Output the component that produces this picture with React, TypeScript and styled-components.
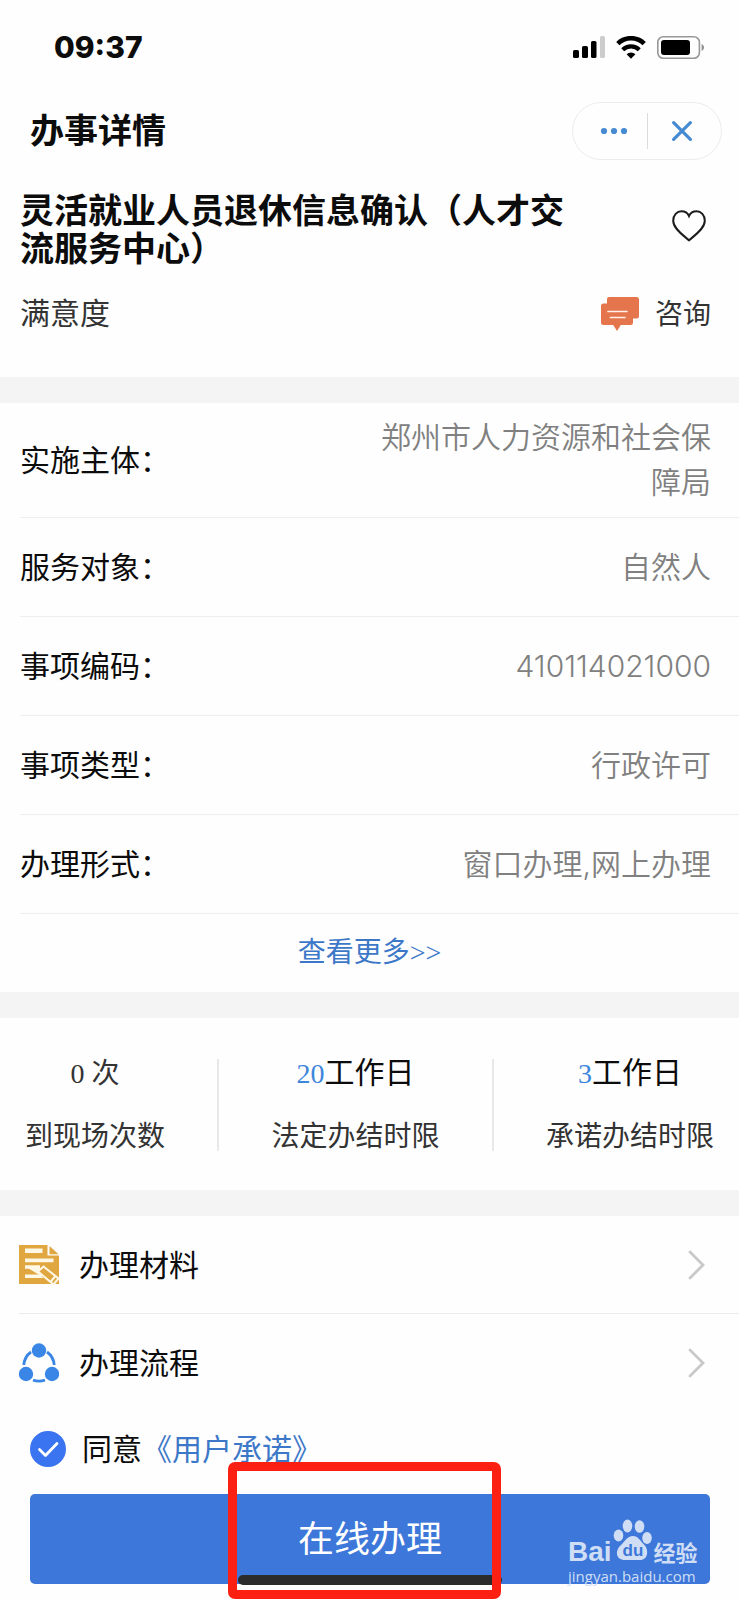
import React from "react";
import styled, { createGlobalStyle } from "styled-components";

const sans = `Inter, "Noto Sans CJK SC", sans-serif`;
const serif = `"Liberation Serif", "Noto Sans CJK SC", serif`;

const GlobalStyle = createGlobalStyle`
  *, *::before, *::after { box-sizing: border-box; }
  body { margin: 0; background: #fefefe; color: #0c0c0c; font-family: ${sans}; font-size: 30px; line-height: 44px; }
  button { font: inherit; color: inherit; background: none; border: 0; padding: 0; cursor: pointer; }
  svg { display: block; flex: none; }
  h1, h2, p, dl, dt, dd { margin: 0; padding: 0; }
`;

const Page = styled.main`
  width: 100%;
  overflow: hidden;
`;

const StatusBar = styled.header`
  display: flex;
  align-items: center;
  justify-content: space-between;
  height: 94px;
  padding: 0 34px 0 54px;
`;

const Clock = styled.time`
  font-weight: 800;
  font-size: 30px;
`;

const StatusIcons = styled.div`
  display: flex;
  align-items: center;
  gap: 11px;
`;

const NavBar = styled.nav`
  display: flex;
  align-items: center;
  justify-content: space-between;
  height: 74px;
  padding: 0 17px 0 30px;
`;

const NavTitle = styled.h1`
  font-size: 34px;
  font-weight: 700;
  line-height: 40px;
`;

const Capsule = styled.div`
  display: flex;
  align-items: center;
  width: 150px;
  height: 58px;
  border: 1px solid #ececec;
  border-radius: 29px;
`;

const CapsuleButton = styled.button`
  display: flex;
  width: 50%;
  height: 36px;
  padding-left: 8px;
  align-items: center;
  justify-content: center;
  & + & {
    padding: 0 6px 0 0;
    border-left: 1px solid #dcdcdc;
  }
`;

const Summary = styled.section`
  padding: 24px 28px 20px 20px;
`;

const SummaryRow = styled.div`
  display: flex;
  align-items: center;
  justify-content: space-between;
`;

const ItemTitle = styled.h2`
  max-width: 560px;
  font-size: 34px;
  font-weight: 700;
  line-height: 38px;
`;

const IconButton = styled.button`
  padding: 0 5px 8px;
`;

const Satisfaction = styled.p`
  color: #333;
`;

const Consult = styled.button`
  display: flex;
  align-items: center;
  gap: 15px;
  margin: 24px 0 21px;
  color: #333;
  font-size: 28px;
`;

const Band = styled.div`
  height: 26px;
  background: #f4f4f4;
`;

const Details = styled.dl`
  padding-left: 20px;
`;

const DetailRow = styled.div`
  display: flex;
  align-items: center;
  justify-content: space-between;
  min-height: 99px;
  padding: 12px 28px 12px 0;
  border-bottom: 1px solid #eee;
  line-height: 45px;
`;

const DetailValue = styled.dd`
  max-width: 350px;
  color: #808080;
  font-weight: 350;
  text-align: right;
`;

const MoreLink = styled.a`
  display: block;
  color: #3d78c8;
  font-family: ${serif};
  font-size: 28px;
  line-height: 78px;
  text-align: center;
  text-decoration: none;
`;

const Stats = styled.section`
  display: flex;
  align-items: center;
  justify-content: space-between;
  padding: 32px 25px 31px;
`;

const Stat = styled.div`
  display: flex;
  flex-direction: column;
  align-items: center;
  gap: 18px;
  color: #333;
  font-size: 28px;
  line-height: 45px;
`;

const StatValue = styled.p`
  font-family: ${serif};
`;

const Days = styled.span`
  color: #3d86dc;
`;

const Unit = styled.span`
  color: #0c0c0c;
  font-size: 30px;
`;

const Divider = styled.div`
  width: 2px;
  height: 92px;
  background: #e8e8e8;
`;

const Links = styled.section`
  padding-left: 19px;
`;

const LinkRow = styled.a`
  display: flex;
  align-items: center;
  gap: 20px;
  height: 97px;
  padding-right: 34px;
  color: inherit;
  text-decoration: none;
  & + & {
    height: 99px;
    border-top: 1px solid #ebebeb;
  }
`;

const LinkText = styled.span`
  flex: 1;
`;

const Agreement = styled.div`
  display: flex;
  align-items: center;
  height: 44px;
  margin-top: 15px;
  padding-left: 30px;
`;

const AgreeLabel = styled.label`
  display: flex;
  align-items: center;
  gap: 16px;
`;

const TickWrap = styled.span`
  display: block;
  position: relative;
  width: 36px;
  height: 36px;
  svg { position: absolute; inset: 0; pointer-events: none; }
`;

const Tick = styled.input`
  appearance: none;
  display: block;
  width: 36px;
  height: 36px;
  margin: 0;
  border: 2px solid #3a74f0;
  border-radius: 50%;
  &:checked { background: #3a74f0; }
`;

const PromiseLink = styled.a`
  color: #3d78c8;
  text-decoration: none;
`;

const ActionArea = styled.footer`
  position: relative;
  padding: 23px 29px 16px 30px;
`;

const SubmitButton = styled.button`
  display: block;
  width: 100%;
  height: 90px;
  border-radius: 5px;
  background: #3c77d9;
  color: #fff;
  font-size: 36px;
`;

const HomeIndicator = styled.div`
  position: absolute;
  bottom: 15px;
  left: calc(50% - 132px);
  width: 264px;
  height: 10px;
  border-radius: 5px;
  background: #2b2b2b;
`;

const Highlight = styled.div`
  position: absolute;
  bottom: 1px;
  left: calc(50% - 142px);
  width: 273px;
  height: 137px;
  border: 9px solid #fb2012;
  border-radius: 7px;
  pointer-events: none;
`;

const Watermark = styled.div`
  position: absolute;
  right: 39px;
  bottom: 14px;
  width: 132px;
  color: #d0def5;
  pointer-events: none;
`;

const WatermarkBrand = styled.div`
  display: flex;
  align-items: baseline;
  font-family: "Liberation Sans", "Noto Sans CJK SC", sans-serif;
  font-size: 28px;
  font-weight: 700;
  line-height: 24px;
`;

const WatermarkSuffix = styled.span`
  font-size: 22px;
`;

const WatermarkUrl = styled.div`
  font-family: "Open Sans", sans-serif;
  font-size: 15px;
  line-height: 20px;
`;

const SignalIcon = () => (
  <svg width="32" height="22" viewBox="0 0 32 22">
    <rect x="0" y="14" width="6" height="8" rx="1.6" />
    <rect x="9" y="10" width="6" height="12" rx="1.6" />
    <rect x="18" y="5" width="5.5" height="17" rx="1.6" />
    <rect x="27" y="0" width="5" height="22" rx="1.6" fill="#ccc" />
  </svg>
);

const WifiIcon = () => (
  <svg width="30" height="23" viewBox="0 0 30 23">
    <path d="M1.8 7.6a18.8 18.8 0 0 1 26.4 0" fill="none" stroke="#000" strokeWidth="4.6" />
    <path d="M6.7 13.7a11.8 11.8 0 0 1 16.6 0" fill="none" stroke="#000" strokeWidth="4.2" />
    <path d="M10.6 18.3a6.2 6.2 0 0 1 8.8 0L15 22.8z" />
  </svg>
);

const BatteryIcon = () => (
  <svg width="48" height="23" viewBox="0 0 48 23">
    <rect x="0.8" y="0.8" width="41.6" height="21.4" rx="5.5" fill="none" stroke="#979797" strokeWidth="1.6" />
    <rect x="4" y="4" width="29" height="15" rx="3" />
    <path d="M44.6 8c3.2 1.6 3.2 5.4 0 7z" fill="#8f8f8f" />
  </svg>
);

const DotsIcon = () => (
  <svg width="28" height="8" viewBox="0 0 28 8" fill="#468ad2">
    <circle cx="4" cy="4" r="3.1" />
    <circle cx="14" cy="4" r="3.1" />
    <circle cx="24" cy="4" r="3.1" />
  </svg>
);

const CloseIcon = () => (
  <svg width="22" height="22" viewBox="0 0 22 22">
    <path d="M2.6 2.6l16.8 16.8M19.4 2.6L2.6 19.4" stroke="#468ad2" strokeWidth="3.2" strokeLinecap="round" />
  </svg>
);

const HeartIcon = () => (
  <svg width="34" height="32" viewBox="0 0 34 32">
    <path
      d="M17 30.3C11.5 25.5 1.2 18.5 1.2 10.7 1.2 5 5 1.3 9.4 1.3c3.4 0 6.2 1.6 7.6 4.7 1.4-3.1 4.2-4.7 7.6-4.7 4.4 0 8.2 3.7 8.2 9.4C32.8 18.5 22.5 25.5 17 30.3z"
      fill="none"
      stroke="#1c1c1c"
      strokeWidth="2"
    />
  </svg>
);

const ChatIcon = () => (
  <svg width="40" height="36" viewBox="0 0 40 36">
    <path
      d="M9 1h27.5a2.5 2.5 0 0 1 2.5 2.5v16.5a2.5 2.5 0 0 1-2.5 2.5H33v4a2.5 2.5 0 0 1-2.5 2.5H20.8L17 35l-3.8-6H3.5A2.5 2.5 0 0 1 1 26.5V10a2.5 2.5 0 0 1 2.5-2.5h3.5V3a2 2 0 0 1 2-2z"
      fill="#e5754c"
    />
    <path d="M8 15.5h19M10.5 21.5H25" stroke="#fff0e8" strokeWidth="1.7" strokeLinecap="round" />
  </svg>
);

const MaterialIcon = () => (
  <svg width="40" height="40" viewBox="0 0 40 40">
    <path d="M0 0h28.5v10.5H40V39H0z" fill="#e0a640" />
    <path d="M30.5 1l9 8.3h-9z" fill="#e0a640" />
    <path d="M6 3.5h17.5v4.5H6zM6 13.6h28.5v3.6H6zM6 20.3h15v3.4H6zM6 29.5h15l3.5 3.5H6z" fill="#fff8e6" />
    <path d="M8 22.5l13 .5 4 5-3 3z" fill="#fff8e6" />
    <path d="M24.5 21.5l15 12-5 6-15.5-13z" fill="#e0a640" stroke="#fff8e6" strokeWidth="2" />
    <path d="M36 31.5l-4.5 5.5" stroke="#fff8e6" strokeWidth="2" />
  </svg>
);

const ProcessIcon = () => (
  <svg width="40" height="40" viewBox="0 0 40 40" fill="#3a86e6">
    <path d="M4.8 22C5.3 16 7.8 12 12 9M28 9c4.2 3 6.7 7 7.2 13M14 37.2q6 2 12 0" fill="none" stroke="#3a86e6" strokeWidth="2.8" />
    <circle cx="20" cy="7.5" r="7.2" />
    <circle cx="7" cy="31" r="7.2" />
    <circle cx="33" cy="31" r="7.2" />
  </svg>
);

const ChevronIcon = () => (
  <svg width="17" height="30" viewBox="0 0 17 30">
    <path d="M2 2l13 13L2 28" fill="none" stroke="#c9c9c9" strokeWidth="2.8" strokeLinecap="round" />
  </svg>
);

const CheckIcon = () => (
  <svg width="36" height="36" viewBox="0 0 36 36">
    <path d="M9.5 18.5l6 6L27 12.5" fill="none" stroke="#fff" strokeWidth="2.8" strokeLinecap="round" strokeLinejoin="round" />
  </svg>
);

const PawIcon = () => (
  <svg width="42" height="42" viewBox="0 0 42 42" fill="currentColor">
    <ellipse cx="6.5" cy="16.5" rx="4.8" ry="6" />
    <ellipse cx="15.5" cy="7" rx="4.8" ry="6.5" />
    <ellipse cx="27.5" cy="7.5" rx="4.8" ry="6.3" />
    <ellipse cx="35" cy="19" rx="4.8" ry="6" />
    <path d="M21 17c5 0 7.5 5 11 8.5 5 5 4.5 15.5-4 15.5H13C3.5 41 3 31.5 8.5 26.5 13 22.5 15 17 21 17z" />
    <text x="21" y="37" textAnchor="middle" fontFamily="Liberation Sans, sans-serif" fontSize="17" fontWeight="700" fill="#3c77d9">
      du
    </text>
  </svg>
);

const details = [
  { label: "实施主体：", value: "郑州市人力资源和社会保障局" },
  { label: "服务对象：", value: "自然人" },
  { label: "事项编码：", value: "410114021000" },
  { label: "事项类型：", value: "行政许可" },
  { label: "办理形式：", value: "窗口办理,网上办理" },
];

export default function App() {
  return (
    <>
      <GlobalStyle />
      <Page>
        <StatusBar>
          <Clock>09:37</Clock>
          <StatusIcons>
            <SignalIcon />
            <WifiIcon />
            <BatteryIcon />
          </StatusIcons>
        </StatusBar>

        <NavBar>
          <NavTitle>办事详情</NavTitle>
          <Capsule>
            <CapsuleButton aria-label="更多"><DotsIcon /></CapsuleButton>
            <CapsuleButton aria-label="关闭"><CloseIcon /></CapsuleButton>
          </Capsule>
        </NavBar>

        <Summary>
          <SummaryRow>
            <ItemTitle>灵活就业人员退休信息确认（人才交流服务中心）</ItemTitle>
            <IconButton aria-label="收藏"><HeartIcon /></IconButton>
          </SummaryRow>
          <SummaryRow>
            <Satisfaction>满意度</Satisfaction>
            <Consult><ChatIcon />咨询</Consult>
          </SummaryRow>
        </Summary>

        <Band />

        <Details>
          {details.map((d) => (
            <DetailRow key={d.label}>
              <dt>{d.label}</dt>
              <DetailValue>{d.value}</DetailValue>
            </DetailRow>
          ))}
        </Details>
        <MoreLink href="#more">查看更多&gt;&gt;</MoreLink>

        <Band />

        <Stats>
          <Stat>
            <StatValue>0 次</StatValue>
            <p>到现场次数</p>
          </Stat>
          <Divider />
          <Stat>
            <StatValue><Days>20</Days><Unit>工作日</Unit></StatValue>
            <p>法定办结时限</p>
          </Stat>
          <Divider />
          <Stat>
            <StatValue><Days>3</Days><Unit>工作日</Unit></StatValue>
            <p>承诺办结时限</p>
          </Stat>
        </Stats>

        <Band />

        <Links>
          <LinkRow href="#materials">
            <MaterialIcon />
            <LinkText>办理材料</LinkText>
            <ChevronIcon />
          </LinkRow>
          <LinkRow href="#process">
            <ProcessIcon />
            <LinkText>办理流程</LinkText>
            <ChevronIcon />
          </LinkRow>
        </Links>

        <Agreement>
          <AgreeLabel>
            <TickWrap>
              <Tick type="checkbox" defaultChecked />
              <CheckIcon />
            </TickWrap>
            同意
          </AgreeLabel>
          <PromiseLink href="#promise">《用户承诺》</PromiseLink>
        </Agreement>

        <ActionArea>
          <SubmitButton>在线办理</SubmitButton>
          <HomeIndicator />
          <Highlight />
          <Watermark>
            <WatermarkBrand>
              Bai
              <PawIcon />
              <WatermarkSuffix>经验</WatermarkSuffix>
            </WatermarkBrand>
            <WatermarkUrl>jingyan.baidu.com</WatermarkUrl>
          </Watermark>
        </ActionArea>
      </Page>
    </>
  );
}
